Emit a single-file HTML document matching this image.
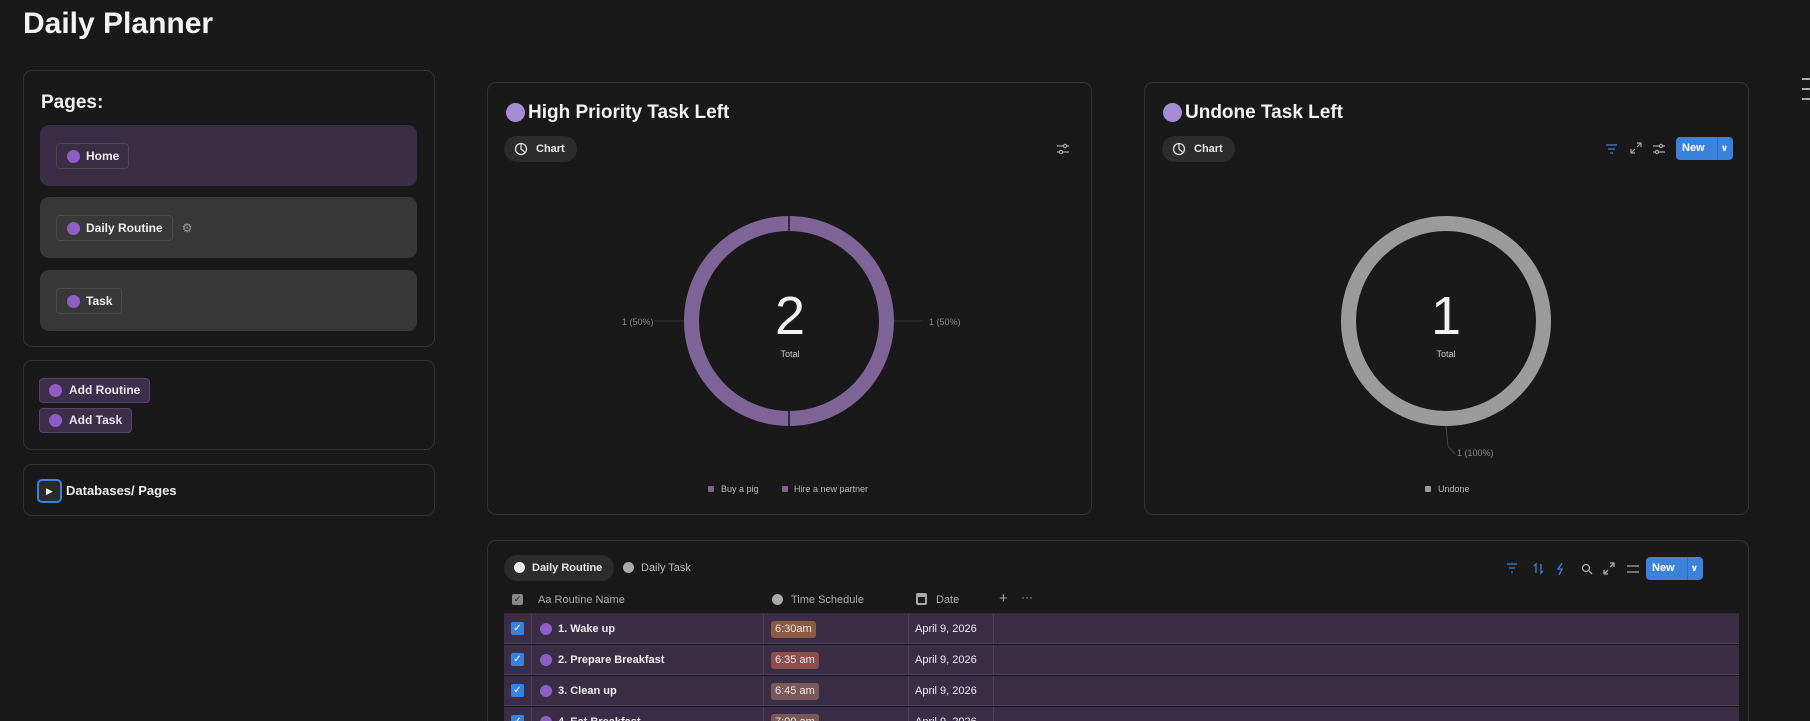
<!DOCTYPE html>
<html style="height:721px;overflow:hidden"><head><meta charset="utf-8"><style>
*{box-sizing:border-box;margin:0;padding:0}
body{width:1810px;height:721px;overflow:hidden;background:#191919;font-family:"Liberation Sans","DejaVu Sans",sans-serif;color:#e8e8e8;position:relative}
.a{position:absolute}
.panel{position:absolute;border:1px solid #333;border-radius:9px}
.card{position:absolute;left:40px;width:377px;height:61px;border-radius:9px;display:flex;align-items:center;padding-left:16px}
.chip{position:relative;height:26px;border:1px solid #4a4a4a;border-radius:4px;padding:0 9px 0 29px;font-size:12px;font-weight:bold;line-height:24px;color:#eee}
.chip:before{content:"";position:absolute;left:10px;top:6px;width:13px;height:13px;border-radius:50%;background:#8d5fc4}
.btn{position:absolute;left:39px;height:25px;background:#3d2e4c;border:1px solid #574468;border-radius:4px;padding:0 9px 0 29px;font-size:12px;font-weight:bold;line-height:23px}
.btn:before{content:"";position:absolute;left:9px;top:5px;width:13px;height:13px;border-radius:50%;background:#8d5fc4}
.pill{position:absolute;height:26px;background:#2c2c2c;border-radius:13px;font-size:11px;font-weight:bold;line-height:26px;padding-left:32px;padding-right:12px}
.new{position:absolute;background:#3b82dc;border-radius:4px;color:#fff;font-size:11px;font-weight:bold;line-height:23px;height:23px;width:57px;padding-left:6px}
.new b{position:absolute;right:5px;top:0;font-size:9px}
.new i{position:absolute;left:41px;top:0;width:1px;height:23px;background:#2e6cc0}
.row{position:absolute;left:504px;width:1235px;height:30px;background:#3b2d45;border-bottom:1px solid #4e4058}
.row .v{position:absolute;top:0;width:1px;height:30px;background:#4e4058}
.cb{position:absolute;left:7px;top:8px;width:13px;height:13px;background:#3b82dc;border-radius:2px;color:#fff;font-size:10px;line-height:13px;text-align:center}
.pd{position:absolute;left:36px;top:9px;width:12px;height:12px;border-radius:50%;background:#8d5fc4}
.nm{position:absolute;left:54px;top:9px;font-size:11px;font-weight:bold;color:#f0f0f0}
.tg{position:absolute;left:267px;top:7px;height:17px;padding:0 4px;font-size:11px;line-height:17px;border-radius:3px;color:#f0e6e0}
.dt{position:absolute;left:411px;top:9px;font-size:11px;color:#eee}
.lg{font-size:9px;color:#bbb}
</style></head><body>
<div class="a" style="left:23px;top:7px;font-size:30px;font-weight:bold;color:#f2f2f2">Daily Planner</div>

<div class="panel" style="left:23px;top:70px;width:412px;height:277px"></div>
<div class="a" style="left:41px;top:92px;font-size:19px;font-weight:bold;color:#f2f2f2">Pages:</div>
<div class="card" style="top:125px;background:#3b2d45"><div class="chip">Home</div></div>
<div class="card" style="top:197px;background:#383838"><div class="chip">Daily Routine</div><span style="margin-left:9px;font-size:12px;color:#999">⚙</span></div>
<div class="card" style="top:270px;background:#383838"><div class="chip">Task</div></div>

<div class="panel" style="left:23px;top:360px;width:412px;height:90px"></div>
<div class="btn" style="top:378px">Add Routine</div>
<div class="btn" style="top:408px">Add Task</div>

<div class="panel" style="left:23px;top:464px;width:412px;height:52px"></div>
<div class="a" style="left:37px;top:479px;width:25px;height:24px;border:2px solid #3b82dc;border-radius:5px;background:#2a2a2a;color:#eee;font-size:9px;line-height:20px;text-align:center">▶</div>
<div class="a" style="left:66px;top:483px;font-size:13px;font-weight:bold;color:#eee">Databases/ Pages</div>

<!-- chart 1 -->
<div class="panel" style="left:487px;top:82px;width:605px;height:433px"></div>
<div class="a" style="left:506px;top:103px;width:19px;height:19px;border-radius:50%;background:#a78bd4"></div>
<div class="a" style="left:528px;top:102px;font-size:19px;font-weight:bold;color:#f2f2f2">High Priority Task Left</div>
<div class="pill" style="left:504px;top:136px">Chart</div>
<svg class="a" style="left:514px;top:142px" width="14" height="14" viewBox="0 0 14 14" fill="none" stroke="#ddd" stroke-width="1.3"><circle cx="7" cy="7" r="5.5"/><path d="M7 1.5V7l3.5 3"/></svg>
<svg class="a" style="left:1056px;top:143px" width="14" height="12" viewBox="0 0 14 12" stroke="#aaa" stroke-width="1.2"><path d="M1 3h12M1 9h12"/><circle cx="9" cy="3" r="1.6" fill="#191919"/><circle cx="5" cy="9" r="1.6" fill="#191919"/></svg>
<svg class="a" style="left:600px;top:200px" width="400" height="310">
<circle cx="189" cy="121" r="97.5" fill="none" stroke="#7f6497" stroke-width="15"/>
<line x1="189" y1="16" x2="189" y2="31" stroke="#191919" stroke-width="1.5"/>
<line x1="189" y1="211" x2="189" y2="226" stroke="#191919" stroke-width="1.5"/>
<line x1="55" y1="121" x2="84" y2="121" stroke="#333"/>
<line x1="294" y1="121" x2="323" y2="121" stroke="#333"/>
</svg>
<div class="a" style="left:740px;top:285px;width:100px;text-align:center;font-size:54px;color:#f2f2f2">2</div>
<div class="a" style="left:740px;top:349px;width:100px;text-align:center;font-size:9px;color:#ccc">Total</div>
<div class="a lg" style="left:622px;top:317px;color:#888">1 (50%)</div>
<div class="a lg" style="left:929px;top:317px;color:#888">1 (50%)</div>
<div class="a" style="left:708px;top:486px;width:6px;height:6px;background:#7f6497;border-radius:1px"></div>
<div class="a lg" style="left:721px;top:484px">Buy a pig</div>
<div class="a" style="left:782px;top:486px;width:6px;height:6px;background:#7f6497;border-radius:1px"></div>
<div class="a lg" style="left:794px;top:484px">Hire a new partner</div>

<!-- chart 2 -->
<div class="panel" style="left:1144px;top:82px;width:605px;height:433px"></div>
<div class="a" style="left:1163px;top:103px;width:19px;height:19px;border-radius:50%;background:#a78bd4"></div>
<div class="a" style="left:1185px;top:102px;font-size:19px;font-weight:bold;color:#f2f2f2">Undone Task Left</div>
<div class="pill" style="left:1162px;top:136px">Chart</div>
<svg class="a" style="left:1172px;top:142px" width="14" height="14" viewBox="0 0 14 14" fill="none" stroke="#ddd" stroke-width="1.3"><circle cx="7" cy="7" r="5.5"/><path d="M7 1.5V7l3.5 3"/></svg>
<svg class="a" style="left:1605px;top:143px" width="13" height="12" viewBox="0 0 13 12" stroke="#3b82dc" stroke-width="1.3"><path d="M1 2h11M3 6h7M5 10h3"/></svg>
<svg class="a" style="left:1630px;top:142px" width="12" height="12" viewBox="0 0 12 12" stroke="#aaa" stroke-width="1.2" fill="none"><path d="M7 1h4v4M11 1L7 5M5 11H1V7M1 11l4-4"/></svg>
<svg class="a" style="left:1652px;top:143px" width="14" height="12" viewBox="0 0 14 12" stroke="#aaa" stroke-width="1.2"><path d="M1 3h12M1 9h12"/><circle cx="9" cy="3" r="1.6" fill="#191919"/><circle cx="5" cy="9" r="1.6" fill="#191919"/></svg>
<div class="new" style="left:1676px;top:137px">New<i></i><b>∨</b></div>
<svg class="a" style="left:1250px;top:200px" width="400" height="310">
<circle cx="196" cy="121" r="97.5" fill="none" stroke="#9b9b9b" stroke-width="15"/>
<path d="M196 226 L198 246 L205 254" fill="none" stroke="#444"/>
</svg>
<div class="a" style="left:1396px;top:285px;width:100px;text-align:center;font-size:54px;color:#f2f2f2">1</div>
<div class="a" style="left:1396px;top:349px;width:100px;text-align:center;font-size:9px;color:#ccc">Total</div>
<div class="a lg" style="left:1457px;top:448px;color:#888">1 (100%)</div>
<div class="a" style="left:1425px;top:486px;width:6px;height:6px;background:#9b9b9b;border-radius:1px"></div>
<div class="a lg" style="left:1438px;top:484px">Undone</div>

<div class="a" style="left:1802px;top:78px;width:8px;height:2px;background:#aaa"></div>
<div class="a" style="left:1802px;top:88px;width:8px;height:2px;background:#aaa"></div>
<div class="a" style="left:1802px;top:98px;width:8px;height:2px;background:#aaa"></div>

<!-- table -->
<div class="panel" style="left:487px;top:540px;width:1262px;height:181px;border-bottom:none;border-bottom-left-radius:0;border-bottom-right-radius:0"></div>
<div class="pill" style="left:504px;top:555px;padding-left:28px">Daily Routine</div>
<div class="a" style="left:514px;top:562px;width:11px;height:11px;border-radius:50%;background:#eee"></div>
<div class="a" style="left:623px;top:562px;width:11px;height:11px;border-radius:50%;background:#aaa"></div>
<div class="a" style="left:641px;top:562px;font-size:11px;color:#bbb">Daily Task</div>
<svg class="a" style="left:1506px;top:562px" width="140" height="14" fill="none" stroke-width="1.3">
<path d="M1 2h10M3 6h6M5 10h2" stroke="#3b82dc"/>
<path d="M30 11V2l-2 2M35 2v9l2-2" stroke="#3b82dc"/>
<path d="M56 1l-4 6h4l-3 6" stroke="#3b82dc"/>
<circle cx="80" cy="6" r="3.5" stroke="#aaa"/><path d="M83 9l3 3" stroke="#aaa"/>
<path d="M104 1h4v4M108 1l-4 4M102 12h-4V8M98 12l4-4" stroke="#aaa"/>
<path d="M121 4h12M121 10h12" stroke="#aaa"/>
</svg>
<div class="new" style="left:1646px;top:557px">New<i></i><b>∨</b></div>
<div class="a" style="left:512px;top:594px;width:11px;height:11px;background:#888;border-radius:2px;color:#222;font-size:9px;line-height:11px;text-align:center">✓</div>
<div class="a" style="left:538px;top:594px;font-size:11px;color:#aaa">Aa <span>Routine Name</span></div>
<div class="a" style="left:772px;top:594px;width:11px;height:11px;border-radius:50%;background:#aaa"></div>
<div class="a" style="left:791px;top:594px;font-size:11px;color:#aaa">Time Schedule</div>
<div class="a" style="left:916px;top:593px;width:11px;height:12px;border:2px solid #aaa;border-top-width:4px;border-radius:2px"></div>
<div class="a" style="left:936px;top:594px;font-size:11px;color:#aaa">Date</div>
<div class="a" style="left:999px;top:590px;font-size:15px;color:#aaa">+</div>
<div class="a" style="left:1021px;top:590px;font-size:12px;color:#aaa">···</div>
<div class="a" style="left:504px;top:613px;width:1235px;height:1px;background:#2f2f2f"></div>

<div class="row" style="top:614px"><div class="v" style="left:27px"></div><div class="v" style="left:259px"></div><div class="v" style="left:404px"></div><div class="v" style="left:489px"></div><div class="cb">✓</div><div class="pd"></div><div class="nm">1. Wake up</div><div class="tg" style="background:#8a5a44">6:30am</div><div class="dt">April 9, 2026</div></div>
<div class="row" style="top:645px"><div class="v" style="left:27px"></div><div class="v" style="left:259px"></div><div class="v" style="left:404px"></div><div class="v" style="left:489px"></div><div class="cb">✓</div><div class="pd"></div><div class="nm">2. Prepare Breakfast</div><div class="tg" style="background:#8e4c4c">6:35 am</div><div class="dt">April 9, 2026</div></div>
<div class="row" style="top:676px"><div class="v" style="left:27px"></div><div class="v" style="left:259px"></div><div class="v" style="left:404px"></div><div class="v" style="left:489px"></div><div class="cb">✓</div><div class="pd"></div><div class="nm">3. Clean up</div><div class="tg" style="background:#7a5a58">6:45 am</div><div class="dt">April 9, 2026</div></div>
<div class="row" style="top:707px;height:14px;border-bottom:none"><div class="v" style="left:27px"></div><div class="v" style="left:259px"></div><div class="v" style="left:404px"></div><div class="v" style="left:489px"></div><div class="cb">✓</div><div class="pd"></div><div class="nm">4. Eat Breakfast</div><div class="tg" style="background:#7a5a58">7:00 am</div><div class="dt">April 9, 2026</div></div>
</body></html>
